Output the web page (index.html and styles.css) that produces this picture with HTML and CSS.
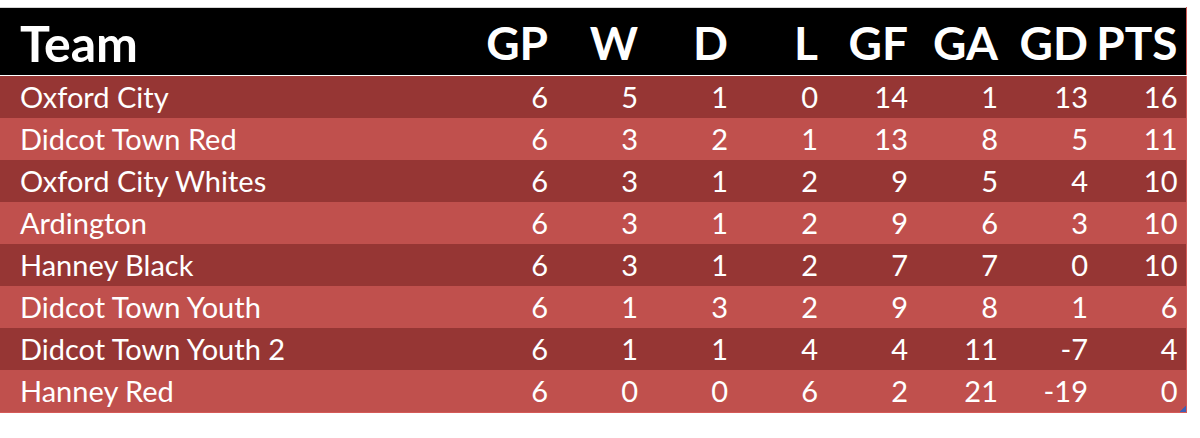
FILE: index.html
```html
<!DOCTYPE html>
<html>
<head>
<meta charset="utf-8">
<link rel="stylesheet" href="styles.css">
</head>
<body>
<div class="sheet">
  <table class="league">
    <colgroup>
      <col class="c-team">
      <col class="c-num"><col class="c-num"><col class="c-num"><col class="c-num">
      <col class="c-num"><col class="c-num"><col class="c-num"><col class="c-num">
    </colgroup>
    <thead>
      <tr>
        <th class="team">Team</th>
        <th>GP</th><th>W</th><th>D</th><th>L</th><th>GF</th><th>GA</th><th>GD</th><th>PTS</th>
      </tr>
    </thead>
    <tbody>
      <tr class="dark"><td class="team">Oxford City</td><td>6</td><td>5</td><td>1</td><td>0</td><td>14</td><td>1</td><td>13</td><td>16</td></tr>
      <tr class="light"><td class="team">Didcot Town Red</td><td>6</td><td>3</td><td>2</td><td>1</td><td>13</td><td>8</td><td>5</td><td>11</td></tr>
      <tr class="dark"><td class="team">Oxford City Whites</td><td>6</td><td>3</td><td>1</td><td>2</td><td>9</td><td>5</td><td>4</td><td>10</td></tr>
      <tr class="light"><td class="team">Ardington</td><td>6</td><td>3</td><td>1</td><td>2</td><td>9</td><td>6</td><td>3</td><td>10</td></tr>
      <tr class="dark"><td class="team">Hanney Black</td><td>6</td><td>3</td><td>1</td><td>2</td><td>7</td><td>7</td><td>0</td><td>10</td></tr>
      <tr class="light"><td class="team">Didcot Town Youth</td><td>6</td><td>1</td><td>3</td><td>2</td><td>9</td><td>8</td><td>1</td><td>6</td></tr>
      <tr class="dark"><td class="team">Didcot Town Youth 2</td><td>6</td><td>1</td><td>1</td><td>4</td><td>4</td><td>11</td><td>-7</td><td>4</td></tr>
      <tr class="light last"><td class="team">Hanney Red</td><td>6</td><td>0</td><td>0</td><td>6</td><td>2</td><td>21</td><td>-19</td><td>0<span class="handle"></span></td></tr>
    </tbody>
  </table>
</div>
</body>
</html>
```
FILE: styles.css
```css
html, body {
  margin: 0;
  padding: 0;
  background: #ffffff;
}
.sheet {
  padding-top: 7px;
  width: 1186px;
}
.league {
  border-collapse: collapse;
  table-layout: fixed;
  width: 1186px;
  font-family: Lato, "Open Sans", sans-serif;
  color: #ffffff;
  border-top: 1px solid #d4d4d4;
  border-right: 1px solid #d05a58;
}
.c-team { width: 466px; }
.c-num { width: 90px; }
th, td {
  padding: 0 8px 0 0;
  text-align: right;
  white-space: nowrap;
  overflow: visible;
}
thead tr {
  background: #000000;
  border-bottom: 1px solid #ffffff;
}
th {
  font-size: 46px;
  font-weight: 700;
  height: 67px;
  line-height: 64px;
  padding-top: 3px;
  box-sizing: border-box;
  vertical-align: middle;
}
th.team {
  font-size: 50px;
}
th.team, td.team {
  text-align: left;
  padding-left: 20px;
}
td {
  font-size: 29px;
  height: 42px;
  line-height: 42px;
  box-sizing: border-box;
  vertical-align: middle;
  position: relative;
}
.dark { background: #963634; }
.light { background: #c0504d; }
.last { border-bottom: 1px solid #d55a58; }
.handle {
  position: absolute;
  right: 0;
  bottom: 0;
  width: 6px;
  height: 6px;
  background: linear-gradient(135deg, transparent 50%, #3f5fb5 50%);
}
```
